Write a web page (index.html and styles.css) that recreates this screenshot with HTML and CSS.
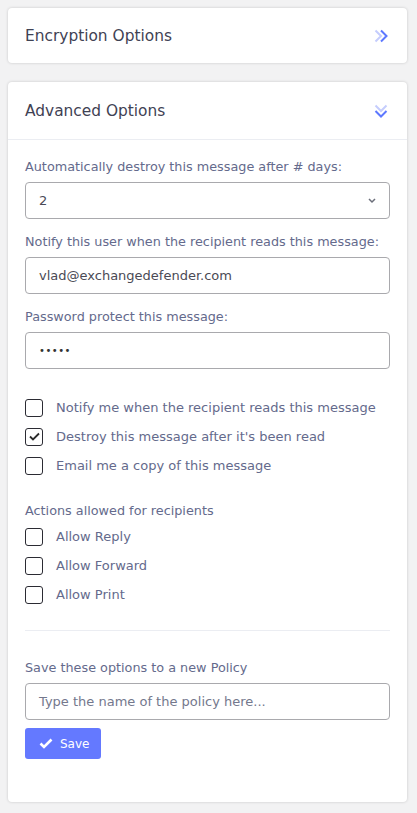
FILE: index.html
```html
<!DOCTYPE html>
<html>
<head>
<meta charset="utf-8">
<link rel="stylesheet" href="styles.css">
</head>
<body>
<div class="card">
  <div class="card-head">
    <h3 class="title">Encryption Options</h3>
    <svg class="chev" width="18" height="18" viewBox="0 0 18 18"><path d="M3.5 3.5l5.5 5.5-5.5 5.5" fill="none" stroke="#c5cdfd" stroke-width="2"/><path d="M9 3.5l5.5 5.5-5.5 5.5" fill="none" stroke="#5d78ff" stroke-width="2"/></svg>
  </div>
</div>
<div class="card card-adv">
  <div class="card-head bordered">
    <h3 class="title">Advanced Options</h3>
    <svg class="chev" width="18" height="18" viewBox="0 0 18 18"><path d="M3.5 3.5l5.5 5.5 5.5-5.5" fill="none" stroke="#c5cdfd" stroke-width="2"/><path d="M3.5 9l5.5 5.5 5.5-5.5" fill="none" stroke="#5d78ff" stroke-width="2"/></svg>
  </div>
  <div class="card-body">
    <div class="group">
      <label class="lbl">Automatically destroy this message after # days:</label>
      <div class="field select">2
        <svg class="caret" width="10" height="6" viewBox="0 0 10 6"><path d="M2 1l3 3 3-3" fill="none" stroke="#6b6e7a" stroke-width="1.5"/></svg>
      </div>
    </div>
    <div class="group">
      <label class="lbl">Notify this user when the recipient reads this message:</label>
      <div class="field">vlad@exchangedefender.com</div>
    </div>
    <div class="group">
      <label class="lbl">Password protect this message:</label>
      <div class="field dots">•••••</div>
    </div>
    <div class="checks">
      <div class="check"><span class="box"></span>Notify me when the recipient reads this message</div>
      <div class="check"><span class="box"><svg width="11" height="9" viewBox="0 0 11 9"><path d="M1 4.5l3 3 6-6" fill="none" stroke="#2b2b2b" stroke-width="1.8"/></svg></span>Destroy this message after it's been read</div>
      <div class="check"><span class="box"></span>Email me a copy of this message</div>
    </div>
    <div class="actions">
      <div class="lbl">Actions allowed for recipients</div>
      <div class="check"><span class="box"></span>Allow Reply</div>
      <div class="check"><span class="box"></span>Allow Forward</div>
      <div class="check"><span class="box"></span>Allow Print</div>
    </div>
    <hr class="sep">
    <div class="group">
      <label class="lbl">Save these options to a new Policy</label>
      <div class="field placeholder">Type the name of the policy here...</div>
    </div>
    <button class="btn"><svg width="14" height="11" viewBox="0 0 14 11"><path d="M1.5 5.5l3.5 3.5 7.5-7.5" fill="none" stroke="#fff" stroke-width="2.6"/></svg>Save</button>
  </div>
</div>
</body>
</html>
```
FILE: styles.css
```css
html, body { margin: 0; padding: 0; }
body {
  background: #f2f2f3;
  font-family: "DejaVu Sans", "Open Sans", sans-serif;
  padding: 8px 10px 8px 8px;
  width: 399px;
  box-sizing: content-box;
}
.card {
  background: #fff;
  border-radius: 4px;
  box-shadow: 0 0 3px rgba(0,0,0,0.18);
}
.card-adv { margin-top: 19px; }
.card-head {
  height: 55px;
  display: flex;
  align-items: center;
  justify-content: space-between;
  padding: 0 17px;
}
.card-head.bordered { height: 57px; border-bottom: 1px solid #ebedf2; }
.title {
  margin: 0;
  font-size: 15.4px;
  font-weight: normal;
  color: #3f4254;
}
.chev { margin-right: 0; }
.card-body { padding: 18px 17px 43px; }
.group { margin-bottom: 14px; }
.lbl {
  display: block;
  font-size: 12.8px;
  color: #646a8c;
  line-height: 18px;
  margin-bottom: 6px;
}
.field {
  height: 37px;
  box-sizing: border-box;
  border: 1px solid #a9a9ad;
  border-radius: 4px;
  padding: 0 13px;
  display: flex;
  align-items: center;
  font-size: 13px;
  color: #4a4a55;
}
.select { justify-content: space-between; padding-right: 12px; }
.dots { font-size: 10px; letter-spacing: 0.5px; color: #333; }
.placeholder { color: #74788d; }
.checks { margin-top: 24px; }
.check {
  display: flex;
  align-items: center;
  height: 29px;
  font-size: 13px;
  color: #646a8c;
}
.box {
  width: 16px;
  height: 16px;
  border: 1px solid #2b2b33;
  border-radius: 3px;
  margin-right: 13px;
  display: flex;
  align-items: center;
  justify-content: center;
  flex: none;
}
.actions { margin-top: 22px; }
.actions .lbl { margin-bottom: 2px; }
.sep {
  border: 0;
  border-top: 1px solid #ebedf2;
  margin: 21px 0 28px;
}
.btn {
  margin-top: -6px;
  height: 31px;
  width: 76px;
  border: 0;
  border-radius: 3px;
  background: #6479ff;
  color: #fff;
  font-family: inherit;
  font-size: 12px;
  font-weight: normal;
  display: flex;
  align-items: center;
  padding: 0 0 0 14px;
  gap: 7px;
}
```
